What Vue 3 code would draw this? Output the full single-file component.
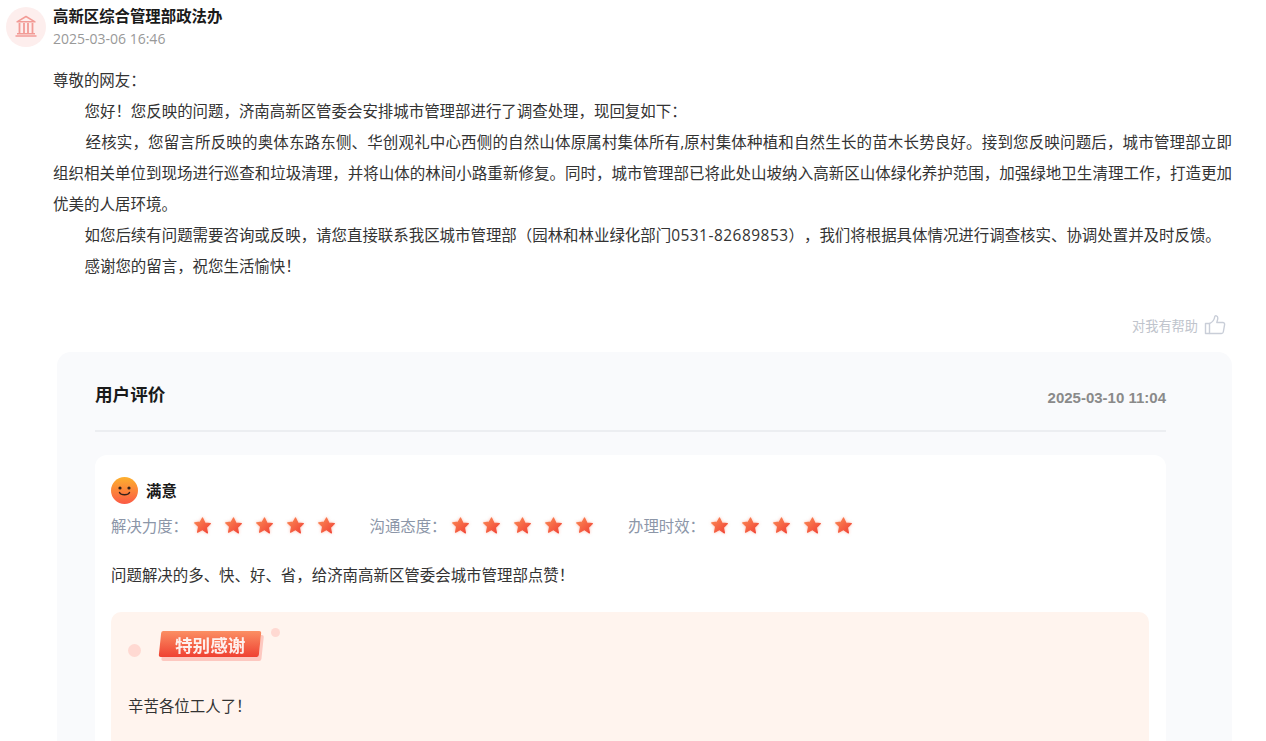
<script setup>
const paragraphs = [
  { text: "尊敬的网友：", cls: "" },
  { text: "您好！您反映的问题，济南高新区管委会安排城市管理部进行了调查处理，现回复如下：", cls: "indent" },
  {
    text: "经核实，您留言所反映的奥体东路东侧、华创观礼中心西侧的自然山体原属村集体所有,原村集体种植和自然生长的苗木长势良好。接到您反映问题后，城市管理部立即组织相关单位到现场进行巡查和垃圾清理，并将山体的林间小路重新修复。同时，城市管理部已将此处山坡纳入高新区山体绿化养护范围，加强绿地卫生清理工作，打造更加优美的人居环境。",
    cls: "indent wide",
  },
];

const ratings = ["解决力度：", "沟通态度：", "办理时效："];
const stars = [1, 2, 3, 4, 5];
</script>

<template>
  <div class="page">
    <div class="head">
      <div class="avatar">
        <svg width="24" height="24" viewBox="0 0 24 24" fill="none" stroke="#f29b96" stroke-width="1.500">
          <path d="M3 6.800 12 1.500l9 5.300z" stroke-linejoin="round" />
          <path d="M5.500 8v10M10 8v10M14 8v10M18.500 8v10" stroke-width="1.800" />
          <path d="M3 18.800h18M1.500 21h21" stroke-width="1.500" />
        </svg>
      </div>
      <div class="head-text">
        <div class="org">高新区综合管理部政法办</div>
        <div class="date">2025-03-06 16:46</div>
      </div>
    </div>

    <div class="reply">
      <p v-for="(p, i) in paragraphs" :key="i" :class="p.cls">{{ p.text }}</p>
      <p class="indent">如您后续有问题需要咨询或反映，请您直接联系我区城市管理部（园林和林业绿化部门<span class="phone">0531-82689853</span>），我们将根据具体情况进行调查核实、协调处置并及时反馈。</p>
      <p class="indent">感谢您的留言，祝您生活愉快！</p>
    </div>

    <div class="helpful">
      <span>对我有帮助</span>
      <svg width="22" height="22" viewBox="0 0 22 22" fill="none" stroke="#c9ced8" stroke-width="1.400" stroke-linejoin="round">
        <path d="M1.500 9.500h4v10h-4z" />
        <path d="M5.500 9.500c2.500-1 4.800-3.600 5.300-7 .2-1.300 3-1 3 1.500 0 1.500-.5 3-1 4.500h6c1.300 0 2 1 1.800 2.200l-1.300 7.300c-.2 1-.9 1.500-1.900 1.500H5.500" />
      </svg>
    </div>

    <div class="eval">
      <div class="eval-head">
        <div class="eval-title">用户评价</div>
        <div class="eval-time">2025-03-10 11:04</div>
      </div>

      <div class="eval-card">
        <div class="mood">
          <svg width="27" height="27" viewBox="0 0 27 27">
            <defs>
              <linearGradient id="face" x1="0" y1="0" x2="0" y2="1">
                <stop offset="0" stop-color="#fdb02e" />
                <stop offset="1" stop-color="#fb5a45" />
              </linearGradient>
            </defs>
            <circle cx="13.500" cy="13.500" r="13.500" fill="url(#face)" />
            <circle cx="9" cy="11" r="1.600" fill="#33211a" />
            <circle cx="18" cy="11" r="1.600" fill="#33211a" />
            <path d="M8.500 15.500c1.500 3 8.500 3 10 0" fill="none" stroke="#33211a" stroke-width="1.400" stroke-linecap="round" />
          </svg>
          <span>满意</span>
        </div>

        <div class="ratings">
          <div v-for="r in ratings" :key="r" class="rating">
            <span class="rating-label">{{ r }}</span>
            <div class="stars">
              <svg v-for="s in stars" :key="s" width="19" height="19" viewBox="0 0 24 24" class="star">
                <defs>
                  <linearGradient :id="'st' + r + s" x1="0" y1="0" x2="1" y2="1">
                    <stop offset="0" stop-color="#fb8a55" />
                    <stop offset="1" stop-color="#f03f33" />
                  </linearGradient>
                </defs>
                <path
                  d="M12 2.500l3 6.300 6.900.9-5 4.800 1.300 6.900L12 17.100l-6.200 3.300 1.300-6.900-5-4.800 6.900-.9z"
                  :fill="'url(#st' + r + s + ')'"
                  :stroke="'url(#st' + r + s + ')'"
                  stroke-width="1.500"
                  stroke-linejoin="round"
                />
              </svg>
            </div>
          </div>
        </div>

        <p class="comment">问题解决的多、快、好、省，给济南高新区管委会城市管理部点赞！</p>

        <div class="thanks">
          <div class="badge-row">
            <i class="dot big"></i>
            <div class="badge"><span>特别感谢</span></div>
            <i class="dot small"></i>
          </div>
          <p class="thanks-text">辛苦各位工人了！</p>
        </div>
      </div>
    </div>
  </div>
</template>

<style scoped>
.page {
  height: 741px;
  overflow: hidden;
  box-sizing: border-box;
  padding: 7px 34px 0 6px;
  font-family: "Open Sans", "Noto Sans CJK SC", sans-serif;
  color: #222;
  text-spacing-trim: space-all;
}
.head {
  display: flex;
  gap: 7px;
  height: 40px;
}
.avatar {
  width: 40px;
  height: 40px;
  border-radius: 50%;
  background: #fdeeed;
  display: flex;
  align-items: center;
  justify-content: center;
}
.org {
  font-size: 15.400px;
  font-weight: 700;
  line-height: 20px;
  color: #1a1a1a;
}
.date {
  font-size: 14px;
  line-height: 20px;
  margin-top: 2px;
  color: #999;
}
.reply {
  margin: 18px 0 0 47px;
  font-size: 15.440px;
  line-height: 31px;
  color: #333;
  text-align: justify;
}
.reply p {
  margin: 0;
}
.phone {
  letter-spacing: 0.500px;
}
.indent {
  text-indent: 31.500px;
}
.reply .wide {
  text-indent: 32.500px;
  font-size: 15.500px;
}
.helpful {
  display: flex;
  justify-content: flex-end;
  align-items: center;
  gap: 6px;
  margin-top: 31px;
  padding-right: 6px;
  height: 24px;
  font-size: 13.200px;
  color: #c0c4cc;
}
.eval {
  margin: 15px 0 0 51px;
  height: 420px;
  box-sizing: border-box;
  padding: 0 66px 0 38px;
  background: #f9fafc;
  border-radius: 14px;
}
.eval-head {
  display: flex;
  justify-content: space-between;
  align-items: center;
  height: 78px;
  border-bottom: 2px solid #eceef1;
}
.eval-title {
  font-size: 17.600px;
  font-weight: 700;
  color: #1a1a1a;
  margin-top: 4px;
}
.eval-time {
  font-size: 15px;
  font-weight: 700;
  color: #8a8a8a;
  font-family: "Liberation Sans", sans-serif;
  margin-top: 13px;
}
.eval-card {
  margin-top: 23px;
  background: #fff;
  border-radius: 12px;
  padding: 22px 17px 0 16px;
  height: 330px;
}
.mood {
  display: flex;
  align-items: center;
  gap: 8px;
  font-size: 15.400px;
  font-weight: 700;
  color: #1a1a1a;
  height: 27px;
}
.ratings {
  display: flex;
  gap: 34px;
  margin-top: 9px;
  height: 24px;
  align-items: center;
}
.rating {
  display: flex;
  align-items: center;
}
.rating-label {
  font-size: 15.400px;
  color: #8c96a8;
  width: 81.500px;
}
.stars {
  display: flex;
  gap: 12px;
}
.star {
  display: block;
  filter: drop-shadow(0 0 1.500px rgba(250, 110, 80, 0.5));
}
.comment {
  margin: 25px 0 0;
  font-size: 15.440px;
  line-height: 26px;
  color: #333;
}
.thanks {
  margin-top: 24px;
  background: #fff4ee;
  border-radius: 10px;
  padding: 0 17px;
  height: 200px;
}
.badge-row {
  position: relative;
  height: 54px;
}
.dot {
  position: absolute;
  border-radius: 50%;
  background: #ffd9d2;
}
.dot.big {
  left: 0;
  top: 32px;
  width: 13px;
  height: 13px;
}
.dot.small {
  left: 143px;
  top: 16px;
  width: 9px;
  height: 9px;
}
.badge {
  position: absolute;
  left: 32px;
  top: 19px;
  width: 100px;
  height: 26px;
  display: flex;
  align-items: center;
  justify-content: center;
  color: #fff;
  font-size: 17.600px;
  font-weight: 700;
  background: linear-gradient(180deg, #fb8f63, #ef4132);
  transform: skewX(-6deg);
  border-radius: 2px;
  box-shadow: 3px 4px 0 #fdc8c0;
}
.badge span {
  transform: skewX(6deg);
  opacity: 0.9;
}
.thanks-text {
  margin: 27px 0 0;
  font-size: 15.440px;
  line-height: 26px;
  color: #333;
}
</style>

<style>
html,
body {
  margin: 0;
  overflow: hidden;
  background: #fff;
}
</style>
